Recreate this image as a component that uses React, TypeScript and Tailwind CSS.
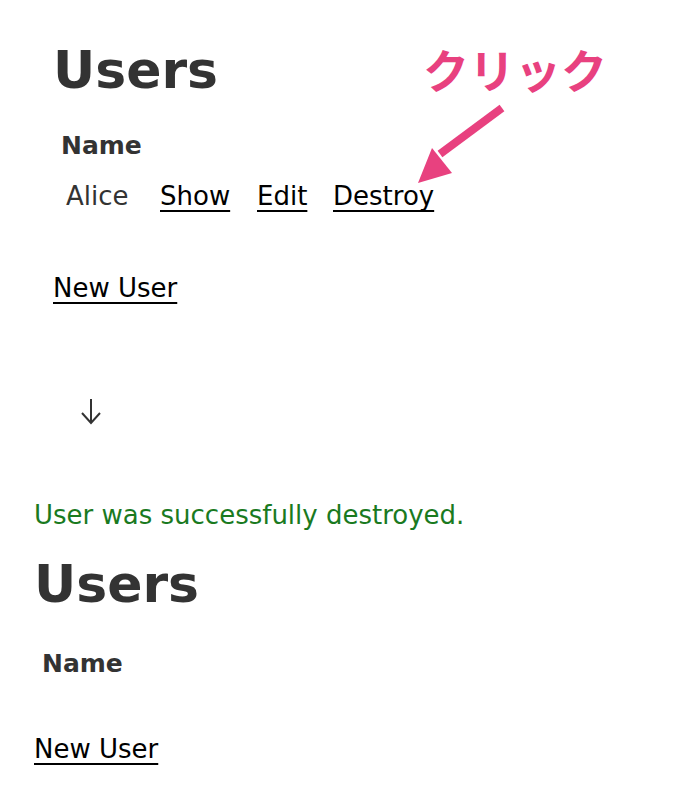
import React from 'react';

const font = { fontFamily: '"DejaVu Sans", Verdana, sans-serif' };

export default function App() {
  return (
    <div className="relative h-[806px] w-[680px] overflow-hidden bg-white" style={font}>
      {/* before */}
      <div className="pl-[53px] pt-[40px]">
        <h1 className="text-[52px] font-bold leading-[60px] text-[#333]">Users</h1>
        <div className="mt-[31px] pl-[8px] text-[25px] font-bold leading-[30px] text-[#333]">Name</div>
        <div className="mt-[20px] flex text-[26px] leading-[30px]">
          <span className="w-[107px] pl-[13px] text-[#333]">Alice</span>
          <a className="w-[97px] text-black underline underline-offset-[5px]">Show</a>
          <a className="w-[76px] text-black underline underline-offset-[5px]">Edit</a>
          <a className="text-black underline underline-offset-[5px]">Destroy</a>
        </div>
        <a className="mt-[62px] inline-block text-[26px] leading-[30px] text-black underline underline-offset-[5px]">
          New User
        </a>
      </div>

      <div className="ml-[81px] mt-[95px] h-[26px] w-[22px]">
        <svg viewBox="0 0 22 26" className="h-[26px] w-[22px]" fill="none" stroke="#333" strokeWidth="2">
          <path d="M10 0v24M1 14l9 10 9-10" />
        </svg>
      </div>

      {/* after */}
      <div className="pl-[34px]">
        <p className="mt-[75px] text-[26px] leading-[30px] text-[#1a7a1f]">User was successfully destroyed.</p>
        <h1 className="mt-[24px] text-[52px] font-bold leading-[60px] text-[#333]">Users</h1>
        <div className="mt-[35px] pl-[8px] text-[25px] font-bold leading-[30px] text-[#333]">Name</div>
        <a className="mt-[55px] inline-block text-[26px] leading-[30px] text-black underline underline-offset-[5px]">
          New User
        </a>
      </div>

      {/* annotation */}
      <div
        className="absolute left-[423px] top-[38px] text-[46px] font-bold leading-[60px] text-[#e8417f]"
        style={{ fontFamily: '"Noto Sans CJK JP", sans-serif' }}
      >
        クリック
      </div>
      <svg className="absolute left-[400px] top-[95px]" width="120" height="100" viewBox="400 95 120 100">
        <path d="M502 108L440 154" stroke="#e8417f" strokeWidth="8" />
        <path d="M418 183L432 148L452 173Z" fill="#e8417f" />
      </svg>
    </div>
  );
}
